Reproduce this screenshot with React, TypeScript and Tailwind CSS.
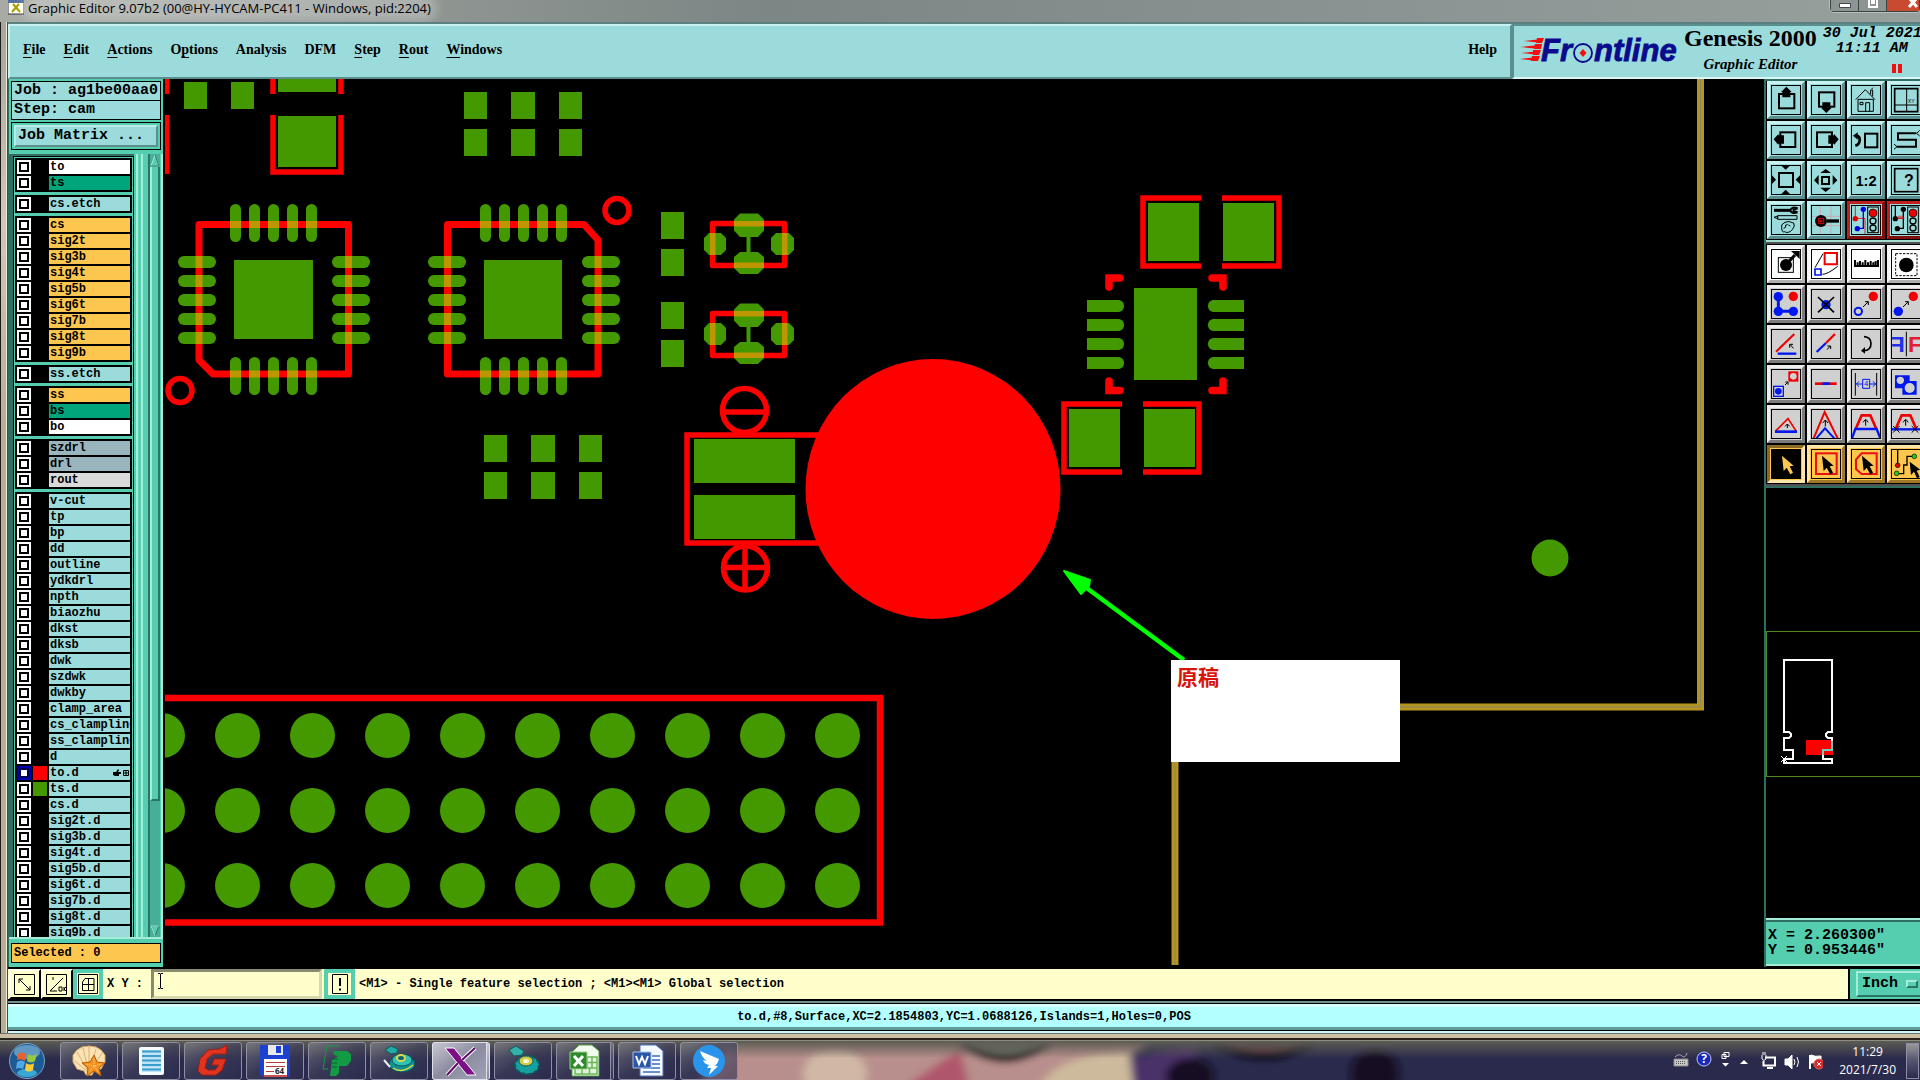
import { clsx } from "clsx";
import { Fragment, type ReactNode, useState } from "react";

const MONO = "font-['Liberation_Mono','DejaVu_Sans_Mono',monospace] font-bold";
const SERIF = "font-['Liberation_Serif',serif] font-bold";
const SANS = "font-['Open_Sans','Noto_Sans',sans-serif]";

const MENUS = [
  { label: "File", hot: 0 },
  { label: "Edit", hot: 0 },
  { label: "Actions", hot: 0 },
  { label: "Options", hot: 1 },
  { label: "Analysis", hot: -1 },
  { label: "DFM", hot: -1 },
  { label: "Step", hot: 0 },
  { label: "Rout", hot: 0 },
  { label: "Windows", hot: 0 },
];

type LayerGroup = { color: string; names: string[] }[];

const WHITE = "bg-white";
const MASK = "bg-[#00a57b]";
const SIGNAL = "bg-[#fdc64f]";
const DOC = "bg-[#9bdbdb]";
const DRILL = "bg-[#9bb5bf]";

const LAYERS: LayerGroup[] = [
  [
    { color: WHITE, names: ["to"] },
    { color: MASK, names: ["ts"] },
  ],
  [{ color: DOC, names: ["cs.etch"] }],
  [
    {
      color: SIGNAL,
      names: ["cs", "sig2t", "sig3b", "sig4t", "sig5b", "sig6t", "sig7b", "sig8t", "sig9b"],
    },
  ],
  [{ color: DOC, names: ["ss.etch"] }],
  [
    { color: SIGNAL, names: ["ss"] },
    { color: MASK, names: ["bs"] },
    { color: WHITE, names: ["bo"] },
  ],
  [
    { color: DRILL, names: ["szdrl", "drl"] },
    { color: "bg-[#dadada]", names: ["rout"] },
  ],
  [
    {
      color: DOC,
      names: [
        "v-cut", "tp", "bp", "dd", "outline", "ydkdrl", "npth", "biaozhu", "dkst", "dksb",
        "dwk", "szdwk", "dwkby", "clamp_area", "cs_clampline", "ss_clampline", "d", "to.d",
        "ts.d", "cs.d", "sig2t.d", "sig3b.d", "sig4t.d", "sig5b.d", "sig6t.d", "sig7b.d",
        "sig8t.d", "sig9b.d",
      ],
    },
  ],
];

const SWATCH: Record<string, string> = { "to.d": "bg-[#ff0000]", "ts.d": "bg-[#449900]" };

function LayerRow({ name, color }: { name: string; color: string }) {
  const [on, setOn] = useState(name === "to.d");
  return (
    <label className="flex h-[14px] gap-0.5">
      <input
        type="checkbox"
        checked={on}
        onChange={() => setOn(!on)}
        className="size-[14px] shrink-0 appearance-none border-2 border-white bg-white shadow-[inset_0_0_0_2px_#000] checked:border-[#0000b4] checked:shadow-[inset_0_0_0_2px_#000050]"
      />
      <span className={clsx("w-[14px] shrink-0", SWATCH[name])} />
      <span
        className={clsx(
          "flex min-w-0 flex-1 items-center overflow-hidden whitespace-nowrap pl-px text-xs leading-[14px]",
          color
        )}
      >
        {name}
        {name === "to.d" && (
          <svg viewBox="0 0 16 8" className="ml-auto mr-px h-2 w-4">
            <path d="M0 3h3l2-3 1 1-1 2h3v2H6v2H2L0 6z" />
            <path d="M10.500 1.500h5v5h-5zM13 1v6M10 4h6" fill="none" stroke="#000" />
          </svg>
        )}
      </span>
    </label>
  );
}

function LayerPanel() {
  return (
    <aside className={clsx("flex w-[155px] shrink-0 flex-col border-l border-[#2f6e60] bg-[#55ceb0]", MONO)}>
      <div className="mx-0.5 mt-0.5 border border-black bg-[#9bdbdb] pl-0.5 text-[15px] leading-[18px] whitespace-nowrap">
        Job : ag1be00aa0
      </div>
      <div className="mx-0.5 -mt-px border border-black bg-[#9bdbdb] pl-0.5 text-[15px] leading-[18px] whitespace-nowrap">
        Step: cam
      </div>
      <div className="mx-0.5 mt-0.5 border border-black p-0.5">
        <button
          type="button"
          className="block w-full border-2 border-[#b8ecec] border-r-[#5a8f8f] border-b-[#5a8f8f] bg-[#9bdbdb] pl-0.5 text-left text-[15px] leading-[18px]"
        >
          Job Matrix ...
        </button>
      </div>
      <div className="mt-1 flex min-h-0 flex-1 border-b-2 border-[#a5ecd9]">
        <div className="w-1 shrink-0 bg-[#2f6e60]" />
        <div className="min-h-0 w-[121px] shrink-0 overflow-hidden border-t-2 border-[#2f6e60]">
          <div className="flex flex-col gap-[3px] border-x border-t border-black px-px pt-px">
            {LAYERS.map((group, i) => (
              <div key={i} className="flex flex-col gap-0.5 bg-black p-0.5">
                {group.map((part) =>
                  part.names.map((n) => <LayerRow key={n} name={n} color={part.color} />)
                )}
              </div>
            ))}
          </div>
        </div>
        <div className="w-0.5 shrink-0" />
        <div className="w-[2px] shrink-0 bg-[#a5ecd9]" />
        <div className="w-[3px] shrink-0" />
        <div className="w-[2px] shrink-0 bg-[#a5ecd9]" />
        <div className="w-[5px] shrink-0" />
        <div className="flex w-3 shrink-0 flex-col border-l-2 border-[#2b7564] bg-[#47ae97]">
          <svg viewBox="0 0 10 13" className="h-[13px]">
            <path d="M5 1L9 12H1z" fill="#55ceb0" stroke="#a5ecd9" />
            <path d="M5 1L9 12H1" fill="none" stroke="#2b7564" />
          </svg>
          <div className="h-[81%] border-r-2 border-b-2 border-l-2 border-[#2b7564] border-l-[#a5ecd9] bg-[#55ceb0]" />
          <svg viewBox="0 0 10 12" className="mt-auto h-3">
            <path d="M5 11L9 1H1z" fill="#55ceb0" stroke="#2b7564" />
            <path d="M9 1H1L5 11" fill="none" stroke="#a5ecd9" />
          </svg>
        </div>
        <div className="ml-auto w-0.5 bg-[#a5ecd9]" />
      </div>
      <div className="mx-0.5 mt-1 mb-1 border border-black bg-[#fdc64f] pl-0.5 text-xs leading-[18px]">
        Selected : 0
      </div>
    </aside>
  );
}

const PAD = "#449900";
const RED = "#ff0000";
const MIX = "#be9600";

const ROWS = [262, 281, 300, 319, 338];

/** Leadless package: silkscreen outline, pads, and the blend where they cross. */
function Qfn({ x, left, right, silk }: { x: number; left: number; right: number; silk: string }) {
  return (
    <g>
      <path d={silk} fill="none" stroke={RED} strokeWidth="7" strokeLinejoin="round" />
      <g fill={PAD}>
        {ROWS.map((y, i) => (
          <Fragment key={y}>
            <rect x={x + 52 + i * 19} y="204" width="11" height="38" rx="5.500" />
            <rect x={x + 52 + i * 19} y="357" width="11" height="38" rx="5.500" />
            <rect x={x} y={y - 6} width="38" height="12" rx="6" />
            <rect x={x + 154} y={y - 6} width="38" height="12" rx="6" />
          </Fragment>
        ))}
      </g>
      <g fill={MIX}>
        {ROWS.map((y, i) => (
          <Fragment key={y}>
            <rect x={x + 52 + i * 19} y="221" width="11" height="7" />
            <rect x={x + 52 + i * 19} y="370.500" width="11" height="7" />
            <rect x={left - 3.5} y={y - 6} width="7" height="12" />
            <rect x={right - 3.5} y={y - 6} width="7" height="12" />
          </Fragment>
        ))}
      </g>
    </g>
  );
}

function Crystal({ dy }: { dy: number }) {
  return (
    <g transform={`translate(0 ${dy})`}>
      <path
        d="M712.500 223.500H784.500V265.500H712.500Z"
        fill="none"
        stroke={RED}
        strokeWidth="5.500"
        strokeLinejoin="round"
      />
      <g fill={PAD}>
        <path d="M740 213.500h18l6 6v11l-6 6.500h-18l-6-6.500v-11z" />
        <path d="M740 252h18l6 5v11l-6 6h-18l-6-6v-11z" />
        <path d="M709 233h12l5 5v12l-5 5h-12l-5-5v-12z" />
        <path d="M776 233h13l5 5v12l-5 5h-13l-5-5v-12z" />
        <rect x="746.500" y="236" width="4" height="17" />
      </g>
      <g fill={MIX}>
        <rect x="734" y="221" width="30" height="5.500" />
        <rect x="734" y="262.500" width="30" height="5.500" />
        <rect x="710" y="233" width="5.500" height="22" />
        <rect x="782" y="233" width="5.500" height="22" />
      </g>
    </g>
  );
}

const PADS: [number, number, number, number][] = [
  [184, 82, 23, 27], [231, 82, 23, 27], [278, 79, 58, 13], [278, 116, 58, 51],
  [464, 92, 23, 27], [511, 92, 24, 27], [559, 92, 23, 27],
  [464, 129, 23, 27], [511, 129, 24, 27], [559, 129, 23, 27],
  [234, 260, 79, 79], [484, 260, 78, 79],
  [484, 435, 23, 27], [531, 435, 24, 27], [579, 435, 23, 27],
  [484, 472, 23, 27], [531, 472, 24, 27], [579, 472, 23, 27],
  [661, 212, 23, 27], [661, 249, 23, 27], [661, 302, 23, 27], [661, 340, 23, 27],
  [694, 439, 101, 44], [694, 495, 101, 44],
  [1148, 203, 51, 58], [1223, 203, 51, 58], [1134, 288, 63, 92],
  [1069, 409, 51, 58], [1144, 409, 51, 58],
];

const PIN_ROWS = [300, 319, 338, 357];

function BoardCanvas() {
  return (
    <main className="relative min-w-0 flex-1 overflow-hidden border-l-2 border-black bg-black">
      <svg
        viewBox="165 79 1599 888"
        preserveAspectRatio="xMinYMin slice"
        className="absolute inset-0 h-full w-full"
        aria-label="Board view"
      >
        <path d="M1700.500 79V707H1175V965" fill="none" stroke="#b4961e" strokeWidth="7" />
        <path d="M1700.500 79V707H1175V965" fill="none" stroke="#8c8468" strokeWidth="1" />

        <g fill={PAD}>
          {PADS.map(([x, y, w, h]) => (
            <rect key={`${x}-${y}`} x={x} y={y} width={w} height={h} />
          ))}
          {PIN_ROWS.map((y) => (
            <Fragment key={y}>
              <path d={`M1087 ${y}h32q5 1 5 6t-5 6h-32z`} />
              <path d={`M1244 ${y}h-31q-5 1-5 6t5 6h31z`} />
            </Fragment>
          ))}
          <circle cx="1550" cy="558" r="18.500" />
          {[735.5, 810.5, 885.5].map((cy) =>
            [0, 1, 2, 3, 4, 5, 6, 7, 8, 9].map((i) => (
              <circle key={`${i}-${cy}`} cx={162.5 + i * 75} cy={cy} r="22.500" />
            ))
          )}
        </g>

        <Qfn x={178} left={199} right={348.5} silk="M199 224.500H348.500V374H213L199 360Z" />
        <Qfn x={428} left={447.5} right={598} silk="M447.500 224.500H584L598 240V374H447.500Z" />
        <Crystal dy={0} />
        <Crystal dy={90} />

        <g fill="none" stroke={RED} strokeWidth="5.500">
          <path d="M167 79V94M167 115V174" strokeWidth="4" />
          <path d="M273 79V94M341 79V94M273 115V172H341V115" />
          <circle cx="617" cy="210.500" r="12" />
          <circle cx="180" cy="390.500" r="12" />
          <circle cx="744.500" cy="410.500" r="22" />
          <path d="M724 412H765" />
          <circle cx="745.500" cy="568" r="22" />
          <path d="M724 567.500H767M745 546V590" />
          <path d="M840 435H687V543H840" />
          <path d="M1201 198H1143V266H1201M1222 198H1279V266H1222" />
          <path d="M1122 404H1064V472H1122M1143 404H1199V472H1143" />
          <path
            d="M1109 287V278H1120M1223 287V278H1212M1109 381V390.500H1120M1223 381V390.500H1212"
            strokeWidth="7.500"
            strokeLinecap="round"
          />
          <path d="M160 698H880V922.500H160" strokeWidth="6.500" />
        </g>
        <ellipse cx="933" cy="489" rx="127.500" ry="130" fill={RED} />

        <path d="M1084 586L1184 660" stroke="#00ff00" strokeWidth="4.500" />
        <path
          d="M1064 571L1090 580L1089 586L1081 594Z"
          fill="#00ff00"
          stroke="#00ff00"
          strokeLinejoin="round"
          strokeWidth="2"
        />
      </svg>
      <div className="absolute top-[581px] left-[1006px] h-[102px] w-[229px] bg-white px-1.5 pt-0.5 font-['Noto_Sans_CJK_SC',sans-serif] text-[21px] leading-7 font-bold text-[#d8140c]">
        原稿
      </div>
    </main>
  );
}

const CURSOR = "M33 20L38 66L47 56L58 76L66 71L56 52L68 50Z";

/** Tool drawings, all on a 90 x 90 grid. */
const VIEW_TOOLS: { name: string; hot?: boolean; art: ReactNode }[] = [
  {
    name: "Pan up",
    art: (
      <>
        <rect x="24" y="27" width="46" height="43" fill="none" strokeWidth="6" />
        <path d="M46 5L62 21H58V37H34V21H30Z" stroke="none" />
      </>
    ),
  },
  {
    name: "Pan down",
    art: (
      <>
        <rect x="24" y="22" width="46" height="43" fill="none" strokeWidth="6" />
        <path d="M46 84L62 68H58V52H34V68H30Z" stroke="none" />
      </>
    ),
  },
  {
    name: "Home",
    art: (
      <path
        d="M14 44L43 14L72 44M21 43V79H67V43ZM27 52h9v7h-9zM44 79V53H56V79M59 28V15H65V34M62 12l4-4"
        fill="none"
        strokeWidth="3"
      />
    ),
  },
  {
    name: "Zoom coordinates",
    art: (
      <>
        <path d="M11 11H80V80H11Z" fill="none" strokeWidth="5" />
        <path d="M47 11V80M11 60H80" fill="none" strokeWidth="3" />
        <text x="50" y="55" fontSize="16" stroke="none">XY</text>
      </>
    ),
  },
  {
    name: "Pan left",
    art: (
      <>
        <rect x="28" y="22" width="45" height="44" fill="none" strokeWidth="6" />
        <path d="M8 43L22 27V31H39V56H22V60Z" stroke="none" />
      </>
    ),
  },
  {
    name: "Pan right",
    art: (
      <>
        <rect x="18" y="22" width="45" height="44" fill="none" strokeWidth="6" />
        <path d="M83 43L69 27V31H52V56H69V60Z" stroke="none" />
      </>
    ),
  },
  {
    name: "Previous view",
    art: (
      <>
        <rect x="42" y="26" width="37" height="41" fill="none" strokeWidth="6" />
        <path d="M15 32Q27 33 26 46Q25 59 13 62" fill="none" strokeWidth="8" />
        <path d="M6 32L20 22V44Z" stroke="none" />
      </>
    ),
  },
  {
    name: "Serpentine",
    art: (
      <>
        <path d="M76 25H21V44H75V65H18" fill="none" strokeWidth="6" />
        <path d="M86 16L77 25L86 33M9 57L18 65L9 73" fill="none" strokeWidth="3" />
      </>
    ),
  },
  {
    name: "Zoom in",
    art: (
      <>
        <rect x="24" y="24" width="42" height="42" fill="none" strokeWidth="6" />
        <path d="M30 1H58L44 14ZM30 88H58L44 74ZM2 30V58L15 44ZM88 30V58L74 44Z" stroke="none" />
      </>
    ),
  },
  {
    name: "Zoom out",
    art: (
      <>
        <rect x="33" y="36" width="21" height="21" fill="none" strokeWidth="6" />
        <path d="M28 24H60L44 12ZM28 68H60L44 81ZM23 30V60L9 46ZM65 30V60L79 46Z" stroke="none" />
      </>
    ),
  },
  {
    name: "Scale 1:2",
    art: (
      <text x="45" y="62" fontSize="44" fontWeight="700" textAnchor="middle" stroke="none">
        1:2
      </text>
    ),
  },
  {
    name: "Query",
    art: (
      <>
        <rect x="11" y="11" width="69" height="69" fill="none" strokeWidth="5" />
        <text x="54" y="63" fontSize="48" fontWeight="700" textAnchor="middle" stroke="none">
          ?
        </text>
      </>
    ),
  },
  {
    name: "Editing options",
    art: (
      <>
        <path d="M9 16H58" fill="none" strokeWidth="9" />
        <path d="M80 10Q62 3 58 16Q62 28 80 22M80 10L68 14V19L80 22" fill="none" strokeWidth="6" />
        <path d="M9 37L20 33V41ZM20 32H78V43H20Z" fill="none" strokeWidth="3" />
        <path
          d="M32 68Q28 58 42 52Q52 46 68 54Q74 62 64 74Q52 87 40 80Q33 84 32 68M42 62l8-4M52 60l6 3M38 70q8-2 6-8"
          fill="none"
          strokeWidth="3"
        />
      </>
    ),
  },
  {
    name: "Snap grid",
    art: (
      <>
        <path d="M28 2V88M60 2V88M2 34H88M2 62H88" fill="none" stroke="#c9a9b0" strokeWidth="3" />
        <circle cx="30" cy="48" r="18" stroke="none" />
        <path d="M48 48H84" strokeWidth="10" />
        <path d="M22 40H38V56H22ZM28 46h5v5h-5z" fill="none" stroke="#e00000" strokeWidth="3" />
      </>
    ),
  },
  {
    name: "Layer signals",
    hot: true,
    art: (
      <>
        <path d="M13 2V40H42V88" fill="none" stroke="#e02020" strokeWidth="3" />
        <path d="M37 12V70H20" fill="none" stroke="#0000e0" strokeWidth="4" />
        <circle cx="13" cy="41" r="8" fill="#e00000" stroke="none" />
        <circle cx="37" cy="13" r="8" fill="#0000e0" stroke="none" />
        <circle cx="19" cy="71" r="8" fill="#0000e0" stroke="none" />
        <rect x="50" y="6" width="32" height="77" fill="none" strokeWidth="3" />
        <circle cx="66" cy="24" r="12" fill="#f00000" strokeWidth="2" />
        <circle cx="66" cy="48" r="9" fill="none" strokeWidth="4" />
        <circle cx="66" cy="69" r="9" fill="none" strokeWidth="4" />
      </>
    ),
  },
  {
    name: "Net signals",
    hot: true,
    art: (
      <>
        <path d="M13 2V40M37 12V70H20" fill="none" strokeWidth="4" />
        <path d="M24 32V40M30 32V40M36 32V40M20 40H40" fill="none" stroke="#e00000" strokeWidth="3" />
        <circle cx="13" cy="41" r="8" stroke="none" />
        <circle cx="37" cy="13" r="8" stroke="none" />
        <circle cx="19" cy="71" r="8" stroke="none" />
        <rect x="50" y="6" width="32" height="77" fill="none" strokeWidth="3" />
        <circle cx="66" cy="24" r="12" fill="#f00000" strokeWidth="2" />
        <circle cx="66" cy="48" r="9" fill="none" strokeWidth="4" />
        <circle cx="66" cy="69" r="9" fill="none" strokeWidth="4" />
      </>
    ),
  },
];

const BLUE = "#0018ee";
const INK_RED = "#f00000";

const NE_ARROW = "M0 18L16 2M6 2H16V12";
const UP_ARROW = "M0 20V2M-8 10L0 1L8 10";

const MEASURE_TOOLS: { name: string; art: ReactNode }[] = [
  {
    name: "Feature",
    art: (
      <>
        <rect x="22" y="26" width="45" height="44" fill="none" strokeWidth="3" />
        <circle cx="45" cy="48" r="18" stroke="none" />
        <path d="M55 36L72 18" strokeWidth="9" />
        <path d="M60 6H86V30Z" stroke="none" />
      </>
    ),
  },
  {
    name: "Resize window",
    art: (
      <>
        <path d="M41 12H78V46H41Z" fill="none" stroke={INK_RED} strokeWidth="6" />
        <path d="M12 60H30V78H12Z" fill="none" stroke={BLUE} strokeWidth="5" />
        <path d="M12 56L36 14M34 76Q50 76 80 52" fill="none" strokeWidth="3" />
      </>
    ),
  },
  {
    name: "Measure",
    art: (
      <path
        d="M9 51H84M12 33V52M20 40V52M27 36V52M35 40V52M43 33V52M51 40V52M59 36V52M67 40V52M74 36V52M81 33V52"
        fill="none"
        strokeWidth="6"
      />
    ),
  },
  {
    name: "Select area",
    art: (
      <>
        <rect x="14" y="14" width="64" height="66" fill="none" strokeWidth="3" strokeDasharray="7 4" />
        <circle cx="46" cy="48" r="22" stroke="none" />
      </>
    ),
  },
];

const EDIT_TOOLS: { name: string; art: ReactNode }[] = [
  {
    name: "Polyline",
    art: (
      <>
        <path d="M22 23V67H67" fill="none" stroke={BLUE} strokeWidth="9" />
        <g fill={BLUE} stroke="none">
          <circle cx="22" cy="23" r="14" />
          <circle cx="22" cy="67" r="14" />
          <circle cx="67" cy="67" r="14" />
        </g>
        <circle cx="67" cy="22" r="14" fill={INK_RED} stroke="none" />
      </>
    ),
  },
  {
    name: "Delete",
    art: (
      <>
        <circle cx="45" cy="47" r="14" fill={BLUE} stroke="none" />
        <path d="M21 24L69 70M69 24L21 70" strokeWidth="5" />
      </>
    ),
  },
  {
    name: "Copy",
    art: (
      <>
        <circle cx="22" cy="67" r="11" fill="none" stroke={BLUE} strokeWidth="6" />
        <circle cx="67" cy="22" r="14" fill={INK_RED} stroke="none" />
        <path d={NE_ARROW} transform="translate(36 36)" fill="none" strokeWidth="3" />
      </>
    ),
  },
  {
    name: "Move",
    art: (
      <>
        <circle cx="22" cy="67" r="14" fill={BLUE} stroke="none" />
        <circle cx="67" cy="22" r="14" fill={INK_RED} stroke="none" />
        <path d={NE_ARROW} transform="translate(36 36)" fill="none" strokeWidth="3" />
      </>
    ),
  },
  {
    name: "Rotate",
    art: (
      <>
        <path d="M15 68L70 15" stroke={INK_RED} strokeWidth="6" />
        <path d="M20 74H76" stroke={BLUE} strokeWidth="7" />
        <path d="M67 58L58 47M56 56V46H66" fill="none" strokeWidth="3" />
      </>
    ),
  },
  {
    name: "Extend",
    art: (
      <>
        <path d="M17 69L45 42" stroke={BLUE} strokeWidth="7" />
        <path d="M45 42L72 15" stroke={INK_RED} strokeWidth="7" />
        <path d="M48 62L58 51M49 51H59V60" fill="none" strokeWidth="3" />
      </>
    ),
  },
  {
    name: "Turn",
    art: (
      <>
        <path d="M39 23Q60 24 60 44Q60 64 38 65" fill="none" strokeWidth="5" />
        <path d="M42 54L30 65L42 74Z" stroke="none" />
      </>
    ),
  },
  {
    name: "Mirror",
    art: (
      <>
        <path d="M46 8V82" strokeWidth="3" />
        <g fontSize="68" fontWeight="700" stroke="none">
          <text x="51" y="70" fill="#e02030">F</text>
          <text transform="translate(41 70) scale(-1 1)" fill="#2030e8">F</text>
        </g>
      </>
    ),
  },
  {
    name: "Change symbol",
    art: (
      <>
        <rect x="52" y="7" width="30" height="31" fill={INK_RED} stroke="none" />
        <circle cx="67" cy="22" r="10" fill="#d0d0d0" stroke="none" />
        <rect x="8" y="52" width="29" height="30" fill="none" stroke={BLUE} strokeWidth="4" />
        <circle cx="22" cy="67" r="10" fill={BLUE} stroke="none" />
        <path d="M42 48L50 40M43 39H51V47" fill="none" strokeWidth="3" />
      </>
    ),
  },
  {
    name: "Merge line",
    art: (
      <>
        <path d="M12 44H77" stroke={INK_RED} strokeWidth="8" />
        <path d="M34 44H56" stroke={BLUE} strokeWidth="8" />
      </>
    ),
  },
  {
    name: "Spacing",
    art: (
      <>
        <path d="M13 12V80M77 12V80" strokeWidth="3" />
        <path
          d="M17 45H34M24 37L16 45L24 53M56 45H74M66 37L74 45L66 53M35 31H56V58H35Z"
          fill="none"
          stroke={BLUE}
          strokeWidth="3"
        />
        <text x="46" y="52" fontSize="22" textAnchor="middle" fill={BLUE} stroke="none">4</text>
      </>
    ),
  },
  {
    name: "Surface union",
    art: (
      <>
        <path d="M12 19H56V36H77V77H34V58H12Z" fill={BLUE} stroke="none" />
        <circle cx="28" cy="34" r="11" fill="#d0d0d0" stroke="none" />
        <circle cx="56" cy="57" r="15" fill="#d0d0d0" stroke="none" />
      </>
    ),
  },
  {
    name: "Triangle",
    art: (
      <>
        <path d="M13 67L51 29L76 67" fill="none" stroke={INK_RED} strokeWidth="5" />
        <path d="M12 68H78" stroke={BLUE} strokeWidth="8" />
        <path d="M49 57V46M42 52L49 45L56 52" fill="none" strokeWidth="3" />
      </>
    ),
  },
  {
    name: "Wedge",
    art: (
      <>
        <path d="M8 88L41 9L80 88" fill="none" stroke={INK_RED} strokeWidth="6" />
        <path d="M16 88L42 58L70 88" fill="none" stroke={BLUE} strokeWidth="6" />
        <path d={UP_ARROW} transform="translate(43 32)" fill="none" strokeWidth="3" />
      </>
    ),
  },
  {
    name: "Trapezoid",
    art: (
      <>
        <path d="M14 60L32 19H58L76 60" fill="none" stroke={INK_RED} strokeWidth="8" />
        <path d="M3 88L13 60H77L88 88" fill="none" stroke={BLUE} strokeWidth="7" />
        <path d={UP_ARROW} transform="translate(44 30)" fill="none" strokeWidth="3" />
      </>
    ),
  },
  {
    name: "Trapezoid cut",
    art: (
      <>
        <path d="M14 60L32 19H58L76 60" fill="none" stroke={INK_RED} strokeWidth="8" />
        <path d="M2 61H88" stroke={BLUE} strokeWidth="7" />
        <path d="M6 51L26 71M26 51L6 71M62 51L82 71M82 51L62 71" strokeWidth="3" />
        <path d={UP_ARROW} transform="translate(44 30)" fill="none" strokeWidth="3" />
      </>
    ),
  },
];

const SELECT_TOOLS: { name: string; dark?: boolean; art: ReactNode }[] = [
  { name: "Select", dark: true, art: <path d={CURSOR} fill="#fdc64f" stroke="none" /> },
  {
    name: "Select by frame",
    art: (
      <>
        <rect x="15" y="13" width="62" height="62" fill="none" stroke="#e81010" strokeWidth="6" />
        <path d={CURSOR} stroke="none" />
      </>
    ),
  },
  {
    name: "Select by polygon",
    art: (
      <>
        <path d="M32 13H77V75H32L15 60V32Z" fill="none" stroke="#e81010" strokeWidth="6" />
        <path d={CURSOR} stroke="none" />
      </>
    ),
  },
  {
    name: "Select net",
    art: (
      <>
        <path d="M20 2V44M18 74H38V48H48V22H68" fill="none" strokeWidth="4" />
        <circle cx="20" cy="49" r="7" fill="#e00000" strokeWidth="2" />
        <circle cx="17" cy="73" r="7" fill="#20d020" strokeWidth="2" />
        <circle cx="70" cy="22" r="7" fill="#20d020" strokeWidth="2" />
        <path d="M56 38L60 78L69 68L78 88L86 84L77 65L88 62Z" stroke="none" />
      </>
    ),
  },
];

function Tool({ name, frame, box, children }: { name: string; frame: string; box?: string; children: ReactNode }) {
  return (
    <button type="button" aria-label={name} className={clsx("size-[38px] border-[3px] p-px", frame)}>
      <span className={clsx("block size-[30px] border border-black", box)}>
        <svg
          viewBox="3 3 84 84"
          className="size-7 font-['Liberation_Sans',sans-serif]"
          stroke="#000"
          fill="#000"
        >
          {children}
        </svg>
      </span>
    </button>
  );
}

const CYAN_FRAME = "bg-[#9bdbdb] border-t-[#c8f2f2] border-l-[#c8f2f2] border-r-[#5b8f8f] border-b-[#5b8f8f]";
const HOT_FRAME = "bg-[#9bdbdb] border-t-[#c02020] border-l-[#c02020] border-r-[#801010] border-b-[#801010]";
const WHITE_FRAME = "bg-white border-t-[#f4f4f4] border-l-[#f4f4f4] border-r-[#b0b0b0] border-b-[#b0b0b0]";
const GRAY_FRAME = "bg-[#d0d0d0] border-t-[#eeeeee] border-l-[#eeeeee] border-r-[#7c7c7c] border-b-[#7c7c7c]";
const GOLD_FRAME = "bg-[#fdc64f] border-t-[#ffe6a8] border-l-[#ffe6a8] border-r-[#a07828] border-b-[#a07828]";
const GOLD_PRESSED = "bg-[#fdc64f] border-t-[#8c6a24] border-l-[#8c6a24] border-r-[#ffe6a8] border-b-[#ffe6a8]";

function ToolPanel() {
  return (
    <aside className="flex w-[156px] shrink-0 flex-col overflow-hidden border-l-2 border-[#2f6e60] bg-black">
      <div className="w-max border-t-2 border-b-2 border-t-[#2f6e60] border-b-[#a5dcd0] bg-black">
        <div className="grid grid-cols-[repeat(4,38px)] gap-0.5 px-px pb-px">
          {VIEW_TOOLS.map((t) => (
            <Tool key={t.name} name={t.name} frame={t.hot ? HOT_FRAME : CYAN_FRAME}>
              {t.art}
            </Tool>
          ))}
        </div>
      </div>
      <div className="w-max border-t-2 border-b-2 border-[#505050]">
        <div className="grid grid-cols-[repeat(4,38px)] gap-0.5 p-px">
          {MEASURE_TOOLS.map((t) => (
            <Tool key={t.name} name={t.name} frame={WHITE_FRAME}>
              {t.art}
            </Tool>
          ))}
          {EDIT_TOOLS.map((t) => (
            <Tool key={t.name} name={t.name} frame={GRAY_FRAME}>
              {t.art}
            </Tool>
          ))}
          {SELECT_TOOLS.map((t) => (
            <Tool
              key={t.name}
              name={t.name}
              frame={t.dark ? GOLD_PRESSED : GOLD_FRAME}
              box={t.dark ? "bg-black" : undefined}
            >
              {t.art}
            </Tool>
          ))}
        </div>
      </div>
      <div className="h-0.5 shrink-0 bg-[#2f6e60]" />
      <div className="mt-[143px] h-[146px] shrink-0 border-y border-l border-[#4c8a1e]">
        <svg viewBox="1767 632 153 144" className="h-[144px] w-[153px]" aria-label="Panel overview">
          <rect x="1806" y="740" width="27" height="15" fill={RED} />
          <path
            d="M1784 660H1832V732H1828L1826 734V736L1828 738H1832V750H1823V759H1832V763H1784V759H1793V750H1784V738H1789L1791 736V734L1789 732H1784Z"
            fill="none"
            stroke="#fff"
            strokeWidth="2"
          />
          <path d="M1832 741V750H1823V755" fill="none" stroke="#70c8c8" strokeWidth="2" />
          <path d="M1781 756L1787 762M1787 756L1781 762" stroke="#fff" />
        </svg>
      </div>
      <div
        className={clsx(
          "mt-auto mb-px border-t-2 border-b-2 border-[#a5ecd9] bg-[#55ceb0] pt-2 pb-1.5 pl-0.5 text-[15px] leading-[15px] whitespace-nowrap shadow-[inset_0_2px_0_#2f6e60]",
          MONO
        )}
      >
        <div>X = 2.260300"</div>
        <div>Y = 0.953446"</div>
      </div>
    </aside>
  );
}

function TitleBar() {
  return (
    <header
      className={clsx(
        "flex h-[22px] shrink-0 items-start bg-gradient-to-r from-[#a8aaa4] via-[#7c8684] via-40% to-[#98a09e] pl-2",
        SANS
      )}
    >
      <svg viewBox="0 0 16 16" className="size-4">
        <path d="M0 0H16V14H0Z" fill="#fffff0" stroke="#334" />
        <path d="M0 0H16V3H0Z" fill="#5570a0" />
        <path d="M5 4L12 12M11 4L4 12" stroke="#a89a00" strokeWidth="2" />
      </svg>
      <h1 className="ml-1 rounded-full bg-white/25 text-[13px] leading-4 shadow-[0_0_10px_6px_rgb(255_255_255/0.25)]">
        Graphic Editor 9.07b2 (00@HY-HYCAM-PC411 - Windows, pid:2204)
      </h1>
      <div className="ml-auto flex h-3 rounded-b border border-t-0 border-[#3c4444] shadow-[0_0_0_1px_#b8c0be]">
        <button type="button" aria-label="Minimize" className="flex w-7 items-center justify-center border-r border-[#3c4444] bg-[#8d9593]">
          <svg viewBox="0 0 12 5" className="h-[5px] w-3">
            <path d="M.5.5h11v4H.5z" fill="#fff" stroke="#445" />
          </svg>
        </button>
        <button type="button" aria-label="Restore" className="flex w-7 items-start justify-center border-r border-[#3c4444] bg-[#8d9593]">
          <svg viewBox="0 0 12 9" className="h-[9px] w-3">
            <path d="M2 0V7H10V0M5 0V3H7V0" fill="none" stroke="#fff" strokeWidth="2" />
          </svg>
        </button>
        <button type="button" aria-label="Close" className="flex w-8 items-start justify-end bg-[#c84a30]">
          <svg viewBox="0 0 12 9" className="h-[9px] w-3">
            <path d="M2-2L10 7M10-2L2 7" stroke="#fff" strokeWidth="3" />
          </svg>
        </button>
      </div>
    </header>
  );
}

function Logo() {
  return (
    <svg viewBox="0 -5 160 40" className="h-10 w-40 shrink-0" aria-label="Frontline">
      <g fill="#f01010">
        <path d="M4 5L22 3V7ZM0 11L20 9V13ZM1 17L19 15V19ZM0 23L18 21V25Z" />
        <path d="M17 2H24L22 7H16ZM15 8H22L21 13H14ZM13 14H21L19 19H13ZM12 20H20L18 25H11Z" />
      </g>
      <g
        className="font-['Liberation_Sans',sans-serif]"
        fontSize="31"
        fontStyle="italic"
        fontWeight="700"
        fill="#0a0a8c"
        stroke="#0a0a8c"
        strokeWidth="0.800"
      >
        <text x="21" y="25">Fr</text>
        <text x="74" y="25">ntline</text>
      </g>
      <circle cx="63" cy="17" r="9" fill="none" stroke="#0a0a8c" strokeWidth="1.800" />
      <path d="M63 13L66.500 17L63 21L59.500 17Z" fill="#f01010" />
    </svg>
  );
}

function MenuBar() {
  return (
    <div className={clsx("flex h-[57px] shrink-0 border-t-2 border-[#5b8080] bg-[#9bdbdb]", SERIF)}>
      <nav className="flex min-w-0 flex-1 items-center gap-[18px] border-2 border-[#c8f2f2] border-r-[#5b8f8f] border-b-[#5b8f8f] px-[13px] pb-1 text-[14px] leading-4">
        {MENUS.map(({ label, hot }) => (
          <button key={label} type="button">
            {hot < 0 ? (
              label
            ) : (
              <>
                {label.slice(0, hot)}
                <span className="underline underline-offset-[3px]">{label[hot]}</span>
                {label.slice(hot + 1)}
              </>
            )}
          </button>
        ))}
        <button type="button" className="ml-auto">
          Help
        </button>
      </nav>
      <div className="flex w-[408px] shrink-0 border-2 border-[#5b8f8f] border-r-0 border-b-[#d8f6f6] pl-1.5">
        <div className="mt-[5px]">
          <Logo />
        </div>
        <div className="ml-1 flex shrink-0 flex-col items-center">
          <span className="text-2xl leading-6">Genesis 2000</span>
          <span className="mt-1 text-[15px] leading-5 italic">Graphic Editor</span>
        </div>
        <div className={clsx("flex shrink-0 flex-col items-end pl-1.5 text-[15px] leading-[15px] whitespace-nowrap italic", MONO)}>
          <span>30 Jul 2021</span>
          <span className="mr-3.5">11:11 AM</span>
          <span className="mt-2 mr-5 h-[9px] w-2.5 border-x-4 border-[#f01010]" />
        </div>
      </div>
    </div>
  );
}

function PromptBar() {
  return (
    <div className={clsx("flex h-[34px] shrink-0 border-y-2 border-black bg-[#ffffcc] pl-px text-xs", MONO)}>
      <button type="button" aria-label="Snap" className="w-8 border-2 border-[#fffff0] border-r-black border-b-black p-[3px]">
        <svg viewBox="0 0 22 22" className="size-[22px]" fill="none" stroke="#000">
          <path d="M.5.5h20v20H.5zM5 5L16 16M5 9V5H9M16 12V16H12" />
        </svg>
      </button>
      <button type="button" aria-label="Angle" className="w-8 border-2 border-[#fffff0] border-r-black border-b-black p-[3px]">
        <svg viewBox="0 0 22 22" className="size-[22px]" fill="none" stroke="#000">
          <path d="M.5.5h20v20H.5zM4 17L17 4M7 3V6M4 17H11M13 13h3v4h-3zM18 13v4M20 13l-2 2 2 2" />
        </svg>
      </button>
      <button type="button" aria-label="Grid" className="w-[30px] border-4 border-[#55ceb0] bg-[#ffffcc] p-px">
        <svg viewBox="0 0 20 20" className="size-5" fill="none" stroke="#000">
          <path d="M.5.5h19v19H.5zM7 4.500h9v12H4.500V8zM10.500 4V16M4 10.500H16" />
        </svg>
      </button>
      <label htmlFor="xy" className="flex w-12 items-center whitespace-pre pl-1">
        X Y :
      </label>
      <div className="relative flex w-[171px]">
        <input
          id="xy"
          className="w-full border-[3px] border-[#8a8a70] border-r-[#d8d8b0] border-b-[#d8d8b0] bg-[#ffffcc] px-1 outline-none"
        />
        <svg viewBox="0 0 7 16" className="absolute top-1 left-1.5 h-4 w-[7px]" fill="none" stroke="#000">
          <path d="M1 .5H3L3.500 1L4 .5H6M3.500 1V15M1 15.500H3L3.500 15L4 15.500H6" />
        </svg>
      </div>
      <button type="button" aria-label="Alert" className="ml-0.5 w-[31px] border-4 border-[#55ceb0] bg-[#ffffcc] p-px">
        <svg viewBox="0 0 21 20" className="h-5 w-[21px]" fill="none" stroke="#000">
          <path d="M3.500.5h15v19h-15z" />
          <path d="M11 4V12M11 14.500V16.500" strokeWidth="2" />
        </svg>
      </button>
      <output className="flex min-w-0 flex-1 items-center pl-1 whitespace-nowrap">
        {"<M1> - Single feature selection ; <M1><M1> Global selection"}
      </output>
      <div className="w-[72px] shrink-0 border-l-2 border-black bg-[#55ceb0] py-0.5 pl-1.5">
        <button
          type="button"
          className="flex h-[26px] w-20 items-center gap-2 border-2 border-[#a5ecd9] border-b-[#2b7564] pl-1 text-[15px]"
        >
          Inch
          <span className="h-2 w-3 border-2 border-[#a5ecd9] border-r-[#2b7564] border-b-[#2b7564]" />
        </button>
      </div>
    </div>
  );
}

function StatusBar() {
  return (
    <div className="shrink-0 border-t-2 border-[#6f9090] bg-[#c8f8f8] pb-0.5">
      <p
        className={clsx(
          "border border-x-0 border-black bg-[#b3ffff] text-center text-xs leading-[26px] shadow-[inset_0_3px_0_#d8ffff,inset_0_-3px_0_#5f9c9c]",
          MONO
        )}
      >
        to.d,#8,Surface,XC=2.1854803,YC=1.0688126,Islands=1,Holes=0,POS
      </p>
    </div>
  );
}

const TASKS: { name: string; active?: boolean; stacked?: boolean; art: ReactNode }[] = [
  {
    name: "Shell",
    art: (
      <>
        <path d="M14 31L12 27L5 25L1 18L1 11L5 6L10 3L17 2L24 3L29 6L33 11L33 18L29 25L22 27L20 31Z" fill="#f9e3b4" stroke="#d8a860" />
        <path d="M17 29L3 17M17 29L5 8M17 29L11 4M17 29V3M17 29L24 5M17 29L30 9" stroke="#dcb070" />
        <path d="M22 11l3 7 8 1-6 5 2 8-7-5-7 5 1-8-6-5 8-1z" fill="#f39222" stroke="#b55c08" />
        <path d="M22 15V22L29 20M22 22L26 28M22 22L17 28M22 22L14 20" stroke="#ffd48c" strokeDasharray="1 1" />
      </>
    ),
  },
  {
    name: "Notepad",
    art: (
      <>
        <rect x="5" y="3" width="25" height="28" rx="2" fill="#f4fbff" />
        <path d="M8 6H27V28H8Z" fill="#bfe4f6" />
        <path d="M8 7.500H27M8 12H27M8 16.500H27M8 21H27M8 25.500H27" stroke="#3a9ccc" strokeWidth="2" />
      </>
    ),
  },
  {
    name: "Genesis",
    art: <path d="M31 1L30 10H17L11 15L9 24L12 26H19L23 21H16L18 15H30L26 26L20 31H6L2 27L4 15L12 6L24 5Z" fill="#e03420" stroke="#a81c10" />,
  },
  {
    name: "Disk 64",
    art: (
      <>
        <path d="M2 1H32V33H5L2 30Z" fill="#1c40d0" />
        <path d="M10 1H25V11H10Z" fill="#e8e8f0" />
        <path d="M18 2H23V9H18Z" fill="#1c40d0" />
        <path d="M6 15H29V31H6Z" fill="#fff" />
        <path d="M8 18.500H27M8 22.500H27M8 27.500H16" stroke="#b83838" />
        <path d="M6 31H29V33H6Z" fill="#c85050" />
        <text x="17" y="30" fontSize="8" fontWeight="700" fill="#222">64</text>
      </>
    ),
  },
  {
    name: "Incam",
    art: (
      <>
        <path d="M13 7H27L31 10V17L27 22H19V29L16 32H10L12 16L18 12L14 11Z" fill="#129a44" />
        <path d="M20 2H7L3 25H8" stroke="#129a44" />
        <path d="M13 15h5M12 19h5M12 23h5" stroke="#0b5c30" />
      </>
    ),
  },
  {
    name: "Reel",
    art: (
      <>
        <path d="M3 6l6-4 7 3-1 4-6 1z" fill="#22aaa4" stroke="#0a5c60" />
        <ellipse cx="20" cy="20" rx="13" ry="8" fill="#12908c" stroke="#0a5058" />
        <ellipse cx="20" cy="16" rx="10" ry="6" fill="#30c0b4" stroke="#0a5c60" />
        <ellipse cx="19" cy="14" rx="5" ry="4" fill="#e0d84c" />
        <ellipse cx="19" cy="14" rx="3" ry="2" fill="#086870" />
        <path d="M11 24Q20 30 31 21" stroke="#e0d84c" strokeWidth="1.500" />
        <path d="M2 16L8 23" stroke="#e8f0f0" strokeWidth="2" />
      </>
    ),
  },
  {
    name: "X server",
    active: true,
    stacked: true,
    art: (
      <>
        <path d="M2 4H11L33 31H24Z" fill="#7c0e86" stroke="#fff" />
        <path d="M32 4L19 16M15 19L4 31" stroke="#fff" strokeWidth="4" />
        <path d="M32 4L19 16M15 19L4 31" stroke="#5c0a64" strokeWidth="2" />
      </>
    ),
  },
  {
    name: "Reel 2",
    art: (
      <>
        <path d="M3 6l7-4 8 5-2 4-8 1z" fill="#35b0a8" stroke="#0a5c60" />
        <ellipse cx="21" cy="21" rx="12" ry="9" fill="#16a0a0" stroke="#0a5c60" strokeDasharray="4 2" strokeWidth="2" />
        <ellipse cx="20" cy="17" rx="7" ry="5" fill="#d8cc40" stroke="#0a5c60" />
        <ellipse cx="20" cy="17" rx="3" ry="2" fill="#f4f4e0" />
      </>
    ),
  },
  {
    name: "Excel",
    stacked: true,
    art: (
      <>
        <path d="M12 1H25L32 7V32H5V8Z" fill="#f2faf0" stroke="#4f9a3c" />
        <path d="M8 24H30V30H8ZM20 13H30V24H20ZM20 18.500H30M15 24V30M22.500 24V30M25 13V24" fill="#e2f4d8" stroke="#6cb45c" strokeWidth="1.500" />
        <path d="M3 8H20V25H3Z" fill="#2f8a2b" stroke="#9cd08c" />
        <path d="M7 12L16 22M16 12L7 22" stroke="#fff" strokeWidth="3" />
      </>
    ),
  },
  {
    name: "Word",
    art: (
      <>
        <path d="M10 1H26L33 7V32H10Z" fill="#f4f8ff" stroke="#5070b8" />
        <path d="M22 12H30M22 16H30M22 20H30M13 24H30M13 28H30" stroke="#6a90cc" strokeWidth="2" />
        <path d="M3 8H21V24H3Z" fill="#2a56a8" stroke="#a8c0e8" />
        <path d="M6 12L9 20L12 13L15 20L18 12" fill="none" stroke="#fff" strokeWidth="2" />
      </>
    ),
  },
  {
    name: "DingTalk",
    art: (
      <>
        <circle cx="17" cy="17" r="16" fill="#2a94ea" />
        <path d="M8 7L27 15Q26 19 23 22H26L17 31L19 24H15L17 21Q12 20 11 16L15 17Q10 14 8 7Z" fill="#fff" />
      </>
    ),
  },
];

function Taskbar() {
  return (
    <footer className={clsx("relative flex h-10 shrink-0 items-end overflow-hidden border-t border-[#8c8c80] bg-[#24243c] text-white", SANS)}>
      <svg viewBox="0 0 1920 40" preserveAspectRatio="none" className="absolute inset-0 h-full w-full">
        <defs>
          <filter id="soft" x="-5%" width="110%" y="-50%" height="200%">
            <feGaussianBlur stdDeviation="4" />
          </filter>
          <linearGradient id="shade" x2="0" y2="1">
            <stop offset="0" stopColor="#5c5c54" />
            <stop offset="0.450" stopColor="#5c5c54" stopOpacity="0" />
          </linearGradient>
        </defs>
        <rect width="1920" height="40" fill="#2a2a4c" />
        <g filter="url(#soft)">
          <path d="M730 -10H1160L1125 20L1135 60H690Z" fill="#b88f8c" />
          <ellipse cx="835" cy="34" rx="32" ry="26" fill="#d0b8a4" />
          <path d="M900 50L960 8L970 50Z" fill="#b0566c" />
          <path d="M1040 50Q1050 15 1130 10L1135 60Z" fill="#cdb99c" />
          <path d="M960 0Q1005 36 1050 0" fill="#6c7060" stroke="#141414" strokeWidth="8" />
          <path d="M1130 18L1200 0L1180 60H1135Z" fill="#4a3268" />
          <path d="M1215 0Q1265 30 1310 0" fill="#5c3040" stroke="#101018" strokeWidth="8" />
          <ellipse cx="1190" cy="36" rx="24" ry="18" fill="#120c20" />
          <ellipse cx="1375" cy="34" rx="24" ry="26" fill="#120c20" />
        </g>
        <rect width="1920" height="40" fill="url(#shade)" />
      </svg>
      <button type="button" aria-label="Start" className="relative ml-2 shrink-0">
        <svg viewBox="0 0 38 38" className="size-[38px]">
          <circle cx="19" cy="19" r="17.500" fill="#1d5a94" stroke="#7ea4c4" />
          <ellipse cx="19" cy="10" rx="13" ry="7" fill="#7fb0d4" opacity="0.700" />
          <ellipse cx="19" cy="31" rx="10" ry="4" fill="#48c8f0" opacity="0.700" />
          <path d="M10 12q4-3 8 0l-1 7q-4-3-8-1z" fill="#e8632c" />
          <path d="M20 12q4 3 9 0l-2 7q-4 3-8 0z" fill="#9ac83c" />
          <path d="M9 20q4-3 8 0l-2 7q-4-2-7 0z" fill="#52a8e4" />
          <path d="M18 21q4 3 8 0l-1 7q-4 3-8 0z" fill="#fbcc34" />
        </svg>
      </button>
      <div className="relative ml-3.5 flex gap-1">
        {TASKS.map((t) => (
          <button
            key={t.name}
            type="button"
            aria-label={t.name}
            className={clsx(
              "flex h-[38px] w-[58px] items-center justify-center rounded-[3px] border bg-gradient-to-br",
              t.active
                ? "border-[#e0e0ea] from-[#c8c8d4] via-[#8c8ca0] to-[#a0a0b8]"
                : "border-[#8e8ea4] from-[#8c8c90]/60 via-[#40405c]/60 to-[#2c2c50]/60",
              t.stacked && "border-r-4 border-double"
            )}
          >
            <svg viewBox="0 0 34 34" className="size-[34px]" fill="none">
              {t.art}
            </svg>
          </button>
        ))}
      </div>
      <div className="relative ml-auto flex h-full items-center">
        <svg viewBox="0 0 150 24" className="h-6 w-[150px]" fill="none" stroke="#fff" aria-label="System tray">
          <path d="M1 10H15V17H1Z" fill="#c8c8c8" stroke="#888" />
          <path d="M3 12.500H13M3 14.500H13" stroke="#555" strokeDasharray="1 1" />
          <path d="M2 8Q6 4 9 7T14 4" stroke="#aaa" />
          <circle cx="31" cy="10" r="7" fill="#1828b8" stroke="#c0c8f0" />
          <text x="31" y="14" fontSize="12" fontWeight="700" fill="#fff" stroke="none" textAnchor="middle">?</text>
          <path d="M51 3.500H56V7.500H51ZM49 5.500H53V9.500H49Z" />
          <path d="M49 14H56L52.500 17.500ZM67 15H75L71 11Z" fill="#fff" stroke="none" />
          <path d="M92 8.500H102V16.500H90.500V12M94 19H100" strokeWidth="2" />
          <path d="M89 6V10Q91 13 93 10V6M90 3V6M92 3V6" />
          <path d="M112 10H115L119 6V20L115 16H112Z" fill="#fff" />
          <path d="M121 10Q123 13 121 16M124 8Q127 13 124 18" />
          <path d="M137 6V20" strokeWidth="2" />
          <path d="M138 6Q142 8 148 7V14Q143 13 138 14Z" fill="#fff" />
          <circle cx="146" cy="15" r="5" fill="#d82828" stroke="#e86060" />
          <path d="M144 13L148 17M148 13L144 17" />
        </svg>
        <time className="ml-4 text-center text-xs leading-[18px]">
          11:29
          <br />
          2021/7/30
        </time>
        <button
          type="button"
          aria-label="Show desktop"
          className="mr-px ml-2.5 h-9 w-[13px] border border-[#8e8ea4] bg-gradient-to-b from-white/40 to-transparent"
        />
      </div>
    </footer>
  );
}

export default function App() {
  return (
    <div className="flex h-screen flex-col overflow-hidden bg-[#c8bfa4] text-black">
      <TitleBar />
      <div className="flex min-h-0 flex-1">
        <div className="w-px shrink-0 bg-[#1c1c1c]" />
        <div className="w-[5px] shrink-0 bg-gradient-to-b from-[#a8a49c] via-[#d0c8b8] via-20% to-[#b8ae94] to-40%" />
        <div className="w-0.5 shrink-0 border-l border-[#f0ead8] bg-[#4c483c]" />
        <div className="flex min-w-0 flex-1 flex-col">
          <MenuBar />
          <div className="flex min-h-0 flex-1">
            <LayerPanel />
            <BoardCanvas />
            <ToolPanel />
          </div>
          <PromptBar />
          <StatusBar />
        </div>
      </div>
      <div className="h-[7px] shrink-0 border-t border-b-2 border-t-[#707070] border-b-[#28241c] bg-[#c8bfa4]" />
      <Taskbar />
    </div>
  );
}
